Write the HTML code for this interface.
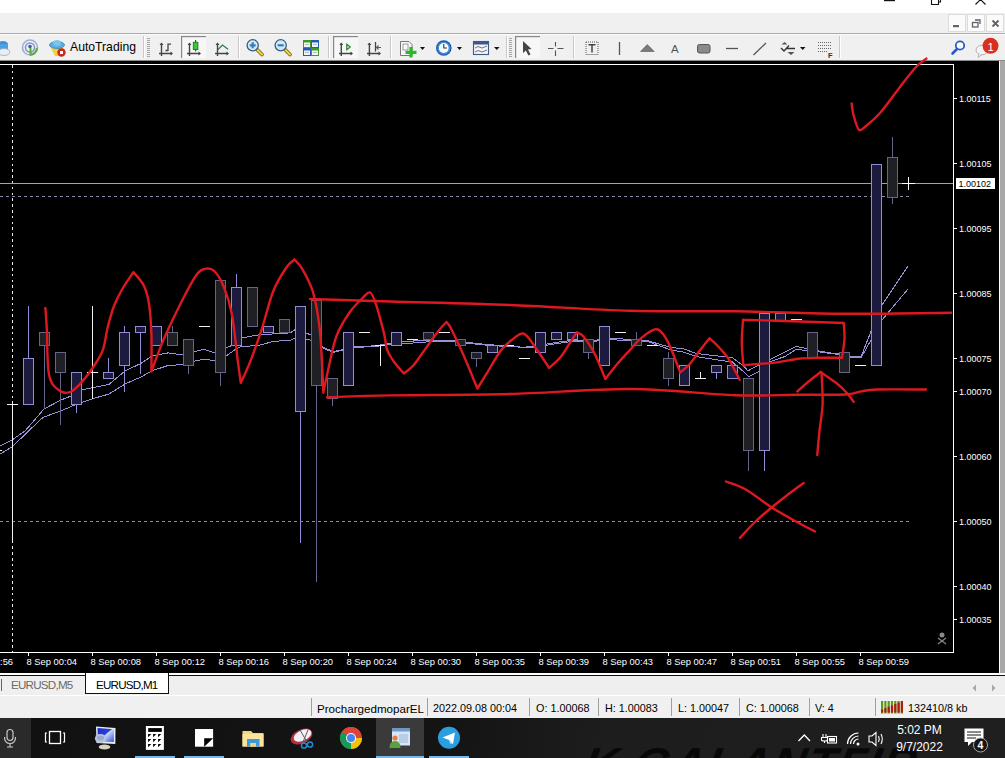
<!DOCTYPE html>
<html><head><meta charset="utf-8">
<style>
html,body{margin:0;padding:0;width:1005px;height:758px;overflow:hidden;background:#f0f0f0;font-family:"Liberation Sans",sans-serif;}
.abs{position:absolute;}
.layer{position:absolute;left:0;top:0;}
.pl{font-family:"Liberation Sans",sans-serif;font-size:9px;fill:#fff;}
.tl{font-family:"Liberation Sans",sans-serif;font-size:9.4px;fill:#fff;}
.st{position:absolute;top:701.5px;font-size:11.5px;color:#000;white-space:nowrap;}
.sep{position:absolute;top:698px;width:1px;height:18px;background:#a0a0a0;}
</style></head><body>
<div class="abs" style="left:0;top:0;width:1005px;height:13px;background:#fff"></div>
<div class="abs" style="left:0;top:13px;width:1005px;height:20px;background:#f0f0f0"></div>
<div class="abs" style="left:0;top:33px;width:1005px;height:1px;background:#a9a9a9"></div>
<div class="abs" style="left:0;top:34px;width:1005px;height:1px;background:#fcfcfc"></div>
<div class="abs" style="left:0;top:35px;width:1005px;height:25px;background:#f0f0f0"></div>
<svg class="layer" width="1005" height="758" viewBox="0 0 1005 758">
<!-- window controls at very top -->
<rect x="884" y="0" width="11" height="1.2" fill="#111"/>
<path d="M931.5 -2 V4.5 H938.5 V-2 M934 -2 V-1 H940.5 V2 H938.5" fill="none" stroke="#111" stroke-width="1.1"/>
<path d="M975.5 4.5 L980.5 -0.5 L985.5 4.5" fill="none" stroke="#111" stroke-width="1.1"/>
<!-- MDI buttons -->
<rect x="948.5" y="14.5" width="17" height="17" fill="#fbfbfb" stroke="#dcdcdc"/>
<rect x="967.5" y="14.5" width="17" height="17" fill="#fbfbfb" stroke="#dcdcdc"/>
<rect x="986.5" y="14.5" width="17" height="17" fill="#fbfbfb" stroke="#dcdcdc"/>
<rect x="953" y="25" width="6" height="2.2" fill="#5d636b"/>
<rect x="972.5" y="22.5" width="5.5" height="4.5" fill="none" stroke="#5d636b" stroke-width="1.3"/>
<path d="M975 20 H980 V24" fill="none" stroke="#5d636b" stroke-width="1.3"/>
<path d="M992.5 20.5 L998.5 26.5 M998.5 20.5 L992.5 26.5" stroke="#5d636b" stroke-width="1.8"/>
<!-- toolbar icons -->
<g id="tb">
<!-- db cloud partial -->
<ellipse cx="3" cy="44" rx="5" ry="3" fill="#3d8fd6"/><rect x="-2" y="44" width="10" height="6" fill="#4aa0e0"/>
<ellipse cx="4" cy="52" rx="6" ry="3.5" fill="#e8eef4" stroke="#9aa8b8" stroke-width="0.8"/>
<!-- signal -->
<circle cx="30" cy="47.5" r="7.5" fill="none" stroke="#9db0d8" stroke-width="1.6"/>
<circle cx="30" cy="47.5" r="4.5" fill="none" stroke="#7d94c8" stroke-width="1.5"/>
<circle cx="30" cy="46.5" r="1.8" fill="#3a5fb0"/>
<path d="M30.5 48 V55 M30 55 Q36 54 37 48" fill="none" stroke="#55b040" stroke-width="2"/>
<!-- autotrading -->
<path d="M51 48 L64 48 L60 56 L55 56 Z" fill="#f0d040"/>
<ellipse cx="57" cy="45" rx="7.5" ry="3.5" fill="#5aaee0" stroke="#3a80b8" stroke-width="0.8"/>
<ellipse cx="57" cy="43" rx="4" ry="3" fill="#7cc4ee"/>
<circle cx="61.5" cy="52.5" r="4.2" fill="#c82a1a"/><rect x="60" y="51" width="3" height="3" fill="#fff"/>
<text x="70" y="51" font-size="12.2" fill="#000" font-family="Liberation Sans">AutoTrading</text>
<rect x="143" y="36" width="1" height="22" fill="#c8c8c8"/><rect x="144" y="36" width="1" height="22" fill="#fff"/>
<g fill="#a8a8a8"><rect x="147" y="38" width="3" height="1"/><rect x="147" y="40" width="3" height="1"/><rect x="147" y="42" width="3" height="1"/><rect x="147" y="44" width="3" height="1"/><rect x="147" y="46" width="3" height="1"/><rect x="147" y="48" width="3" height="1"/><rect x="147" y="50" width="3" height="1"/><rect x="147" y="52" width="3" height="1"/><rect x="147" y="54" width="3" height="1"/><rect x="147" y="56" width="3" height="1"/></g>
<!-- bar chart --><path d="M161.5 43.5 V56 M159 53.5 H172" stroke="#444" stroke-width="1.4" fill="none"/><path d="M159.5 45.0 L161.5 42.5 L163.5 45.0 Z M170.5 51.5 L173 53.5 L170.5 55.5 Z" fill="#444"/><path d="M168 43.5 V51 M165.5 50.5 H168 M168 44.2 H171" stroke="#444" stroke-width="1.3" fill="none"/><rect x="181.5" y="36" width="24.5" height="22" fill="#f7f7f7"/><rect x="181" y="36" width="1.2" height="22" fill="#888"/><rect x="181" y="36" width="25" height="1.2" fill="#888"/><path d="M189.5 43.5 V56 M187 53.5 H200" stroke="#444" stroke-width="1.4" fill="none"/><path d="M187.5 45.0 L189.5 42.5 L191.5 45.0 Z M198.5 51.5 L201 53.5 L198.5 55.5 Z" fill="#444"/><path d="M195.6 40 V51.5" stroke="#1a6a1a" stroke-width="1.2"/><rect x="193.3" y="42.3" width="4.6" height="7.2" fill="#3ac83a" stroke="#1a7a1a" stroke-width="0.9"/><path d="M217.5 43.5 V56 M215 53.5 H228" stroke="#444" stroke-width="1.4" fill="none"/><path d="M215.5 45.0 L217.5 42.5 L219.5 45.0 Z M226.5 51.5 L229 53.5 L226.5 55.5 Z" fill="#444"/><path d="M217.5 50 L222.5 45 L228 49.3" stroke="#2a7a3a" stroke-width="1.2" fill="none"/>
<rect x="238" y="36" width="1" height="22" fill="#c8c8c8"/><rect x="239" y="36" width="1" height="22" fill="#fff"/>
<!-- zoom in -->
<path d="M257.5 50 L262 54.5" stroke="#6a5a10" stroke-width="3.6" stroke-linecap="round"/><path d="M257.5 50 L262 54.5" stroke="#f0d840" stroke-width="2" stroke-linecap="round"/>
<circle cx="252.7" cy="45.3" r="5.6" fill="#cfeaf8" stroke="#3a5a80" stroke-width="1.3"/>
<path d="M249.7 45.3 H255.7 M252.7 42.3 V48.3" stroke="#3a7ab8" stroke-width="2.2"/>
<path d="M285.5 50 L290 54.5" stroke="#6a5a10" stroke-width="3.6" stroke-linecap="round"/><path d="M285.5 50 L290 54.5" stroke="#f0d840" stroke-width="2" stroke-linecap="round"/>
<circle cx="280.7" cy="45.3" r="5.6" fill="#cfeaf8" stroke="#3a5a80" stroke-width="1.3"/>
<path d="M277.7 45.3 H283.7" stroke="#3a7ab8" stroke-width="2.2"/>
<!-- tile -->
<rect x="303" y="40" width="8" height="8" fill="#3c9a2c"/><rect x="311" y="40" width="8" height="8" fill="#2a5ab0"/>
<rect x="303" y="48" width="8" height="8" fill="#2a5ab0"/><rect x="311" y="48" width="8" height="8" fill="#3c9a2c"/>
<rect x="304" y="42.5" width="6" height="4.5" fill="#f4f8f0"/><rect x="312" y="42.5" width="6" height="4.5" fill="#f0f4fc"/>
<rect x="304" y="50.5" width="6" height="4.5" fill="#f0f4fc"/><rect x="312" y="50.5" width="6" height="4.5" fill="#f4f8f0"/>
<path d="M305 44.5 H309 M313 44.5 H317 M305 52.5 H309 M313 52.5 H317" stroke="#aab" stroke-width="0.8"/>
<rect x="328" y="36" width="1" height="22" fill="#c8c8c8"/><rect x="329" y="36" width="1" height="22" fill="#fff"/>
<!-- autoscroll pressed --><rect x="333.5" y="36" width="24.5" height="22" fill="#f7f7f7"/><rect x="333" y="36" width="1.2" height="22" fill="#888"/><rect x="333" y="36" width="25" height="1.2" fill="#888"/><path d="M341.3 43.5 V56 M339 53.5 H352" stroke="#444" stroke-width="1.4" fill="none"/><path d="M339.3 45.0 L341.3 42.5 L343.3 45.0 Z M350.5 51.5 L353 53.5 L350.5 55.5 Z" fill="#444"/><path d="M346.8 44.3 L350.2 47 L346.8 49.7 Z" fill="none" stroke="#2a8a2a" stroke-width="1.3"/><path d="M369.4 43.5 V56 M367 53.5 H380" stroke="#444" stroke-width="1.4" fill="none"/><path d="M367.4 45.0 L369.4 42.5 L371.4 45.0 Z M378.5 51.5 L381 53.5 L378.5 55.5 Z" fill="#444"/><path d="M375.5 42 V51.5" stroke="#444" stroke-width="1.3"/><path d="M381 47.5 H376.5 M378.5 45.5 L376.5 47.5 L378.5 49.5" stroke="#8a4a2a" stroke-width="1.1" fill="none"/>
<rect x="390" y="36" width="1" height="22" fill="#c8c8c8"/><rect x="391" y="36" width="1" height="22" fill="#fff"/>
<!-- new chart -->
<path d="M400.5 41.5 H409 L412 44.5 V55.5 H400.5 Z" fill="#f8f8f8" stroke="#777" stroke-width="1"/>
<rect x="403" y="44" width="5" height="6" fill="none" stroke="#888" stroke-width="0.8"/>
<path d="M411 47 V57.5 M405.5 52.3 H416.5" stroke="#2ab82a" stroke-width="3.2"/>
<path d="M420 47 H425 L422.5 50 Z" fill="#111"/>
<!-- clock -->
<circle cx="443.8" cy="48" r="7.8" fill="#1e56a8"/><circle cx="443.8" cy="48" r="6.6" fill="#3a8ad8"/><circle cx="443.8" cy="48" r="4.9" fill="#f8fbff"/>
<path d="M443.8 44 V48 H447" stroke="#333" stroke-width="1.1" fill="none"/>
<path d="M457 47 H462 L459.5 50 Z" fill="#111"/>
<!-- templates -->
<rect x="473.5" y="41.5" width="15" height="13" fill="#f4f4f8" stroke="#3a5a8a" stroke-width="1.1"/>
<rect x="474" y="42" width="14" height="2.5" fill="#3a5a8a"/>
<path d="M475 48 L478 46.5 L482 48 L487 46" stroke="#666" stroke-width="0.9" fill="none"/><path d="M475 52 L478 50.5 L482 52 L487 50" stroke="#666" stroke-width="0.9" fill="none"/>
<path d="M494 47 H499.5 L496.8 50 Z" fill="#111"/>
<rect x="506" y="36" width="1" height="22" fill="#c8c8c8"/><rect x="507" y="36" width="1" height="22" fill="#fff"/>
<g fill="#a8a8a8"><rect x="509" y="38" width="3" height="1"/><rect x="509" y="40" width="3" height="1"/><rect x="509" y="42" width="3" height="1"/><rect x="509" y="44" width="3" height="1"/><rect x="509" y="46" width="3" height="1"/><rect x="509" y="48" width="3" height="1"/><rect x="509" y="50" width="3" height="1"/><rect x="509" y="52" width="3" height="1"/><rect x="509" y="54" width="3" height="1"/><rect x="509" y="56" width="3" height="1"/></g>
<!-- cursor pressed -->
<rect x="515.5" y="36" width="24.5" height="22" fill="#f7f7f7"/><rect x="515" y="36" width="1.2" height="22" fill="#888"/><rect x="515" y="36" width="25" height="1.2" fill="#888"/>
<path d="M523 41 L523 53 L525.8 50.5 L528.5 55.5 L530.5 54.5 L528 49.5 L531.5 49 Z" fill="#444"/>
<!-- crosshair -->
<path d="M548 48.5 H553.5 M557.5 48.5 H563.5 M555.5 42 V46.5 M555.5 50.5 V56" stroke="#555" stroke-width="1.1"/>
<rect x="573" y="36" width="1" height="22" fill="#c8c8c8"/><rect x="574" y="36" width="1" height="22" fill="#fff"/>
<!-- T -->
<rect x="586" y="42" width="12" height="12.5" fill="none" stroke="#555" stroke-width="1" stroke-dasharray="1 1"/>
<path d="M588.5 44.8 H595.5 M592 44.8 V52.5" stroke="#444" stroke-width="1.5"/>
<path d="M619.5 42 V55" stroke="#555" stroke-width="1.3"/>
<path d="M640.5 51.5 L647.3 44.5 L654.2 51.5 Z" fill="#7a7a7a" stroke="#555" stroke-width="0.6"/>
<text x="671" y="53" font-size="11.5" fill="#555" font-family="Liberation Sans">A</text>
<rect x="697.5" y="44.5" width="12.5" height="8.5" rx="2" fill="#8a8a8a" stroke="#555" stroke-width="1"/>
<path d="M726 48.5 H738" stroke="#555" stroke-width="1.3"/>
<path d="M753.5 55 L766 43" stroke="#555" stroke-width="1.3"/>
<path d="M784.5 42 L787.5 44.5 L781.5 44.5 Z M791 55 L794.5 52 L787.5 52 Z" fill="#555"/>
<path d="M781 48 L784 51 L789 45.5 M786 48.5 H795" stroke="#333" stroke-width="1.4" fill="none"/>
<path d="M800 47 H805.5 L802.7 50 Z" fill="#111"/>
<g stroke="#666" stroke-width="1" stroke-dasharray="1 1"><path d="M818 42.5 H832 M818 45.5 H832 M818 48.5 H832 M818 51.5 H827"/></g>
<text x="828" y="57.5" font-size="7.5" font-weight="bold" fill="#333" font-family="Liberation Sans">F</text>
<rect x="839" y="36" width="1" height="22" fill="#c8c8c8"/><rect x="840" y="36" width="1" height="22" fill="#fff"/>
<!-- search -->
<circle cx="960" cy="45.5" r="4.2" fill="#fff" stroke="#2a5ac8" stroke-width="1.8"/>
<path d="M957 49 L952.5 53.5" stroke="#2a5ac8" stroke-width="2.6" stroke-linecap="round"/>
<!-- chat -->
<ellipse cx="982" cy="50" rx="6" ry="4.8" fill="#f4f4f4" stroke="#aaa" stroke-width="0.9"/>
<path d="M979 54 L978 57.5 L982 54.5" fill="#f4f4f4" stroke="#aaa" stroke-width="0.8"/>
<circle cx="990.5" cy="45.8" r="8" fill="#d8301c"/>
<text x="987.5" y="50.5" font-size="11.5" fill="#fff" font-family="Liberation Sans">1</text>
</g>
</svg>
<svg class="layer" width="1005" height="758" viewBox="0 0 1005 758" style="shape-rendering:crispEdges">
<rect x="0" y="60" width="1005" height="1" fill="#8a8a8a"/>
<rect x="0" y="61" width="999" height="612" fill="#000"/>
<rect x="999" y="61" width="1" height="612" fill="#fff"/>
<rect x="1000" y="61" width="5" height="612" fill="#a8a8a8"/>
<rect x="0" y="64" width="954" height="1" fill="#fff"/>
<rect x="953" y="64" width="1" height="589" fill="#fff"/>
<rect x="0" y="652" width="954" height="1" fill="#fff"/>
<path d="M12.5 65 V652" stroke="#e8e8e8" stroke-width="1" stroke-dasharray="2.6 3.2" fill="none"/>
<rect x="0" y="183" width="953" height="1" fill="#a4a4a4"/>
<path d="M0 196.5 H910" stroke="#8a8aa8" stroke-width="1" stroke-dasharray="3 3" fill="none"/>
<path d="M0 521.5 H910" stroke="#8a8aa8" stroke-width="1" stroke-dasharray="3 3" fill="none"/>
<g><polyline points="0,446 12,440 25,431 44,409 61,400 72,395.6 82,389.7 93,387.6 109,384.4 125,371 141,363.4 152,356 168,352.9 184,355 194,351.8 204,349.3 215,352.9 226,347.6 235,344.4 241,338 258,335 274,333.9 290,332.9 295,329.7 306,333 311,335 322,346.5 333,351.7 343,349.6 354,347 375,345.8 391,343.3 405,341.2 432,340.6 453,340.6 470,342.7 485,344.4 499,345.3 513,346 523,347.4 534,346 545,344.4 557,342.3 570,340.6 582,341 593,340.6 610,338 631,339.6 648,340.6 658,343.8 671,347.4 684,349 696,353.3 709,355 722,356.5 732,357.5 743,365.5 748,370.8 758,365.5 771,358.9 785,352.2 796,346.5 807,348.5 818,350.8 829,352.8 840,354 850,356 861,356.7 871,331.5 882,305 908,266" fill="none" stroke="#9890d8" stroke-width="1"/>
<polyline points="0,454 12,447 40,420 44,417 61,410.8 76,404.5 93,398.6 109,394 125,384 141,377 152,370.8 168,365.5 184,364.5 194,361.3 204,359.2 215,360.7 226,356 235,349.7 241,346.6 258,345.5 274,341.3 290,340.3 295,338 306,339 311,340.3 322,347.5 333,352.5 343,350 354,347.5 375,346.5 391,344.5 403,343.8 432,341.5 453,341.5 470,343.5 485,345 499,346 515,346.5 523,348 534,347 545,345.5 557,343.5 570,341.8 582,342 593,341.5 610,339.6 648,341.7 671,350 684,352.2 696,356.5 709,358.6 722,360.7 732,361.7 744,372 748.5,376.7 758,372 771,361.3 785,356.5 796,349.4 807,350.6 818,351.8 840,354.7 850,357.4 861,358 882,320 908,289" fill="none" stroke="#9890d8" stroke-width="1"/></g>
<rect x="-9" y="450" width="11" height="1" fill="#f0f0f0"/><rect x="7" y="404" width="11" height="1" fill="#f0f0f0"/><rect x="12" y="404" width="1" height="138" fill="#f0f0f0"/><rect x="28" y="306" width="1" height="52" fill="#928cd8"/><rect x="23" y="358" width="11" height="47" fill="#928cd8"/><rect x="24" y="359" width="9" height="45" fill="#1c1a3e"/><rect x="44" y="346" width="1" height="63" fill="#64648c"/><rect x="39" y="332" width="11" height="14" fill="#64648c"/><rect x="40" y="333" width="9" height="12" fill="#1f1f26"/><rect x="60" y="373" width="1" height="52" fill="#64648c"/><rect x="55" y="352" width="11" height="21" fill="#64648c"/><rect x="56" y="353" width="9" height="19" fill="#1f1f26"/><rect x="76" y="405" width="1" height="8" fill="#928cd8"/><rect x="71" y="372" width="11" height="33" fill="#928cd8"/><rect x="72" y="373" width="9" height="31" fill="#1c1a3e"/><rect x="87" y="372" width="11" height="1" fill="#f0f0f0"/><rect x="92" y="306" width="1" height="93" fill="#f0f0f0"/><rect x="108" y="358" width="1" height="14" fill="#928cd8"/><rect x="103" y="372" width="11" height="7" fill="#928cd8"/><rect x="104" y="373" width="9" height="5" fill="#1c1a3e"/><rect x="124" y="326" width="1" height="6" fill="#928cd8"/><rect x="124" y="366" width="1" height="26" fill="#928cd8"/><rect x="119" y="332" width="11" height="34" fill="#928cd8"/><rect x="120" y="333" width="9" height="32" fill="#1c1a3e"/><rect x="140" y="333" width="1" height="41" fill="#928cd8"/><rect x="135" y="326" width="11" height="7" fill="#928cd8"/><rect x="136" y="327" width="9" height="5" fill="#1c1a3e"/><rect x="151" y="326" width="11" height="20" fill="#928cd8"/><rect x="152" y="327" width="9" height="18" fill="#1c1a3e"/><rect x="172" y="326" width="1" height="6" fill="#64648c"/><rect x="167" y="332" width="11" height="14" fill="#64648c"/><rect x="168" y="333" width="9" height="12" fill="#1f1f26"/><rect x="188" y="366" width="1" height="8" fill="#64648c"/><rect x="183" y="339" width="11" height="27" fill="#64648c"/><rect x="184" y="340" width="9" height="25" fill="#1f1f26"/><rect x="199" y="326" width="11" height="1" fill="#f0f0f0"/><rect x="220" y="373" width="1" height="13" fill="#64648c"/><rect x="215" y="280" width="11" height="93" fill="#64648c"/><rect x="216" y="281" width="9" height="91" fill="#1f1f26"/><rect x="236" y="274" width="1" height="13" fill="#928cd8"/><rect x="231" y="287" width="11" height="59" fill="#928cd8"/><rect x="232" y="288" width="9" height="57" fill="#1c1a3e"/><rect x="247" y="287" width="11" height="40" fill="#64648c"/><rect x="248" y="288" width="9" height="38" fill="#1f1f26"/><rect x="263" y="326" width="11" height="7" fill="#928cd8"/><rect x="264" y="327" width="9" height="5" fill="#1c1a3e"/><rect x="279" y="319" width="11" height="14" fill="#64648c"/><rect x="280" y="320" width="9" height="12" fill="#1f1f26"/><rect x="300" y="412" width="1" height="131" fill="#928cd8"/><rect x="295" y="306" width="11" height="106" fill="#928cd8"/><rect x="296" y="307" width="9" height="104" fill="#1c1a3e"/><rect x="316" y="386" width="1" height="196" fill="#64648c"/><rect x="311" y="300" width="11" height="86" fill="#64648c"/><rect x="312" y="301" width="9" height="84" fill="#1f1f26"/><rect x="332" y="399" width="1" height="7" fill="#64648c"/><rect x="327" y="378" width="11" height="21" fill="#64648c"/><rect x="328" y="379" width="9" height="19" fill="#1f1f26"/><rect x="343" y="332" width="11" height="54" fill="#928cd8"/><rect x="344" y="333" width="9" height="52" fill="#1c1a3e"/><rect x="359" y="332" width="11" height="1" fill="#f0f0f0"/><rect x="375" y="345" width="11" height="1" fill="#f0f0f0"/><rect x="380" y="345" width="1" height="21" fill="#f0f0f0"/><rect x="391" y="332" width="11" height="14" fill="#928cd8"/><rect x="392" y="333" width="9" height="12" fill="#1c1a3e"/><rect x="407" y="339" width="11" height="1" fill="#f0f0f0"/><rect x="423" y="332" width="11" height="8" fill="#64648c"/><rect x="424" y="333" width="9" height="6" fill="#1f1f26"/><rect x="439" y="332" width="11" height="1" fill="#f0f0f0"/><rect x="455" y="339" width="11" height="7" fill="#64648c"/><rect x="456" y="340" width="9" height="5" fill="#1f1f26"/><rect x="476" y="359" width="1" height="8" fill="#64648c"/><rect x="471" y="352" width="11" height="7" fill="#64648c"/><rect x="472" y="353" width="9" height="5" fill="#1f1f26"/><rect x="487" y="345" width="11" height="8" fill="#928cd8"/><rect x="488" y="346" width="9" height="6" fill="#1c1a3e"/><rect x="503" y="345" width="11" height="1" fill="#f0f0f0"/><rect x="519" y="358" width="11" height="1" fill="#f0f0f0"/><rect x="535" y="332" width="11" height="21" fill="#928cd8"/><rect x="536" y="333" width="9" height="19" fill="#1c1a3e"/><rect x="551" y="332" width="11" height="8" fill="#928cd8"/><rect x="552" y="333" width="9" height="6" fill="#1c1a3e"/><rect x="567" y="332" width="11" height="8" fill="#928cd8"/><rect x="568" y="333" width="9" height="6" fill="#1c1a3e"/><rect x="588" y="353" width="1" height="6" fill="#64648c"/><rect x="583" y="339" width="11" height="14" fill="#64648c"/><rect x="584" y="340" width="9" height="12" fill="#1f1f26"/><rect x="599" y="326" width="11" height="40" fill="#928cd8"/><rect x="600" y="327" width="9" height="38" fill="#1c1a3e"/><rect x="615" y="332" width="11" height="1" fill="#f0f0f0"/><rect x="636" y="332" width="1" height="7" fill="#64648c"/><rect x="631" y="339" width="11" height="7" fill="#64648c"/><rect x="632" y="340" width="9" height="5" fill="#1f1f26"/><rect x="647" y="345" width="11" height="1" fill="#f0f0f0"/><rect x="668" y="352" width="1" height="6" fill="#64648c"/><rect x="668" y="379" width="1" height="7" fill="#64648c"/><rect x="663" y="358" width="11" height="21" fill="#64648c"/><rect x="664" y="359" width="9" height="19" fill="#1f1f26"/><rect x="679" y="365" width="11" height="21" fill="#928cd8"/><rect x="680" y="366" width="9" height="19" fill="#1c1a3e"/><rect x="695" y="378" width="11" height="1" fill="#f0f0f0"/><rect x="700" y="372" width="1" height="7" fill="#f0f0f0"/><rect x="716" y="373" width="1" height="6" fill="#928cd8"/><rect x="711" y="365" width="11" height="8" fill="#928cd8"/><rect x="712" y="366" width="9" height="6" fill="#1c1a3e"/><rect x="727" y="365" width="11" height="14" fill="#928cd8"/><rect x="728" y="366" width="9" height="12" fill="#1c1a3e"/><rect x="748" y="451" width="1" height="20" fill="#64648c"/><rect x="743" y="378" width="11" height="73" fill="#64648c"/><rect x="744" y="379" width="9" height="71" fill="#1f1f26"/><rect x="764" y="451" width="1" height="20" fill="#928cd8"/><rect x="759" y="313" width="11" height="138" fill="#928cd8"/><rect x="760" y="314" width="9" height="136" fill="#1c1a3e"/><rect x="775" y="313" width="11" height="8" fill="#928cd8"/><rect x="776" y="314" width="9" height="6" fill="#1c1a3e"/><rect x="791" y="319" width="11" height="1" fill="#f0f0f0"/><rect x="807" y="332" width="11" height="27" fill="#64648c"/><rect x="808" y="333" width="9" height="25" fill="#1f1f26"/><rect x="823" y="358" width="11" height="1" fill="#f0f0f0"/><rect x="839" y="352" width="11" height="21" fill="#64648c"/><rect x="840" y="353" width="9" height="19" fill="#1f1f26"/><rect x="855" y="365" width="11" height="1" fill="#f0f0f0"/><rect x="871" y="164" width="11" height="202" fill="#928cd8"/><rect x="872" y="165" width="9" height="200" fill="#1c1a3e"/><rect x="892" y="137" width="1" height="20" fill="#64648c"/><rect x="892" y="198" width="1" height="6" fill="#64648c"/><rect x="887" y="157" width="11" height="41" fill="#64648c"/><rect x="888" y="158" width="9" height="39" fill="#1f1f26"/>
<rect x="902" y="183" width="13" height="1" fill="#fff"/><rect x="908" y="177" width="1" height="13" fill="#fff"/>
<rect x="956" y="178" width="39" height="11" fill="#fff"/>
<text x="958.5" y="186.5" class="pl" fill="#000" style="fill:#000">1.00102</text>
<rect x="954" y="98" width="3" height="1" fill="#fff"/><text x="959" y="102.3" class="pl">1.00115</text><rect x="954" y="163" width="3" height="1" fill="#fff"/><text x="959" y="167.3" class="pl">1.00105</text><rect x="954" y="228" width="3" height="1" fill="#fff"/><text x="959" y="232.3" class="pl">1.00095</text><rect x="954" y="293" width="3" height="1" fill="#fff"/><text x="959" y="297.3" class="pl">1.00085</text><rect x="954" y="358" width="3" height="1" fill="#fff"/><text x="959" y="362.3" class="pl">1.00075</text><rect x="954" y="391" width="3" height="1" fill="#fff"/><text x="959" y="395.3" class="pl">1.00070</text><rect x="954" y="456" width="3" height="1" fill="#fff"/><text x="959" y="460.3" class="pl">1.00060</text><rect x="954" y="521" width="3" height="1" fill="#fff"/><text x="959" y="525.3" class="pl">1.00050</text><rect x="954" y="586" width="3" height="1" fill="#fff"/><text x="959" y="590.3" class="pl">1.00040</text><rect x="954" y="619" width="3" height="1" fill="#fff"/><text x="959" y="623.3" class="pl">1.00035</text><text x="-37.5" y="664.6" class="tl">8 Sep 23:56</text><rect x="28" y="653" width="1" height="3" fill="#fff"/><text x="26.5" y="664.6" class="tl">8 Sep 00:04</text><rect x="92" y="653" width="1" height="3" fill="#fff"/><text x="90.5" y="664.6" class="tl">8 Sep 00:08</text><rect x="156" y="653" width="1" height="3" fill="#fff"/><text x="154.5" y="664.6" class="tl">8 Sep 00:12</text><rect x="220" y="653" width="1" height="3" fill="#fff"/><text x="218.5" y="664.6" class="tl">8 Sep 00:16</text><rect x="284" y="653" width="1" height="3" fill="#fff"/><text x="282.5" y="664.6" class="tl">8 Sep 00:20</text><rect x="348" y="653" width="1" height="3" fill="#fff"/><text x="346.5" y="664.6" class="tl">8 Sep 00:24</text><rect x="412" y="653" width="1" height="3" fill="#fff"/><text x="410.5" y="664.6" class="tl">8 Sep 00:30</text><rect x="476" y="653" width="1" height="3" fill="#fff"/><text x="474.5" y="664.6" class="tl">8 Sep 00:35</text><rect x="540" y="653" width="1" height="3" fill="#fff"/><text x="538.5" y="664.6" class="tl">8 Sep 00:39</text><rect x="604" y="653" width="1" height="3" fill="#fff"/><text x="602.5" y="664.6" class="tl">8 Sep 00:43</text><rect x="668" y="653" width="1" height="3" fill="#fff"/><text x="666.5" y="664.6" class="tl">8 Sep 00:47</text><rect x="732" y="653" width="1" height="3" fill="#fff"/><text x="730.5" y="664.6" class="tl">8 Sep 00:51</text><rect x="796" y="653" width="1" height="3" fill="#fff"/><text x="794.5" y="664.6" class="tl">8 Sep 00:55</text><rect x="860" y="653" width="1" height="3" fill="#fff"/><text x="858.5" y="664.6" class="tl">8 Sep 00:59</text>
<g fill="#888" transform="translate(938,632)" style="shape-rendering:auto"><circle cx="4" cy="3" r="2.5"/><path d="M0 6 L8 12 M8 6 L0 12" stroke="#888" stroke-width="1.2"/></g>
</svg>
<svg class="layer" width="1005" height="758" viewBox="0 0 1005 758">
<g fill="none" stroke="#de1820" stroke-width="2.4" stroke-linecap="round" stroke-linejoin="round">
<path d="M45.4,308 C45.6,311.7 46.5,322.1 46.9,330 C47.2,337.9 47.1,348.1 47.5,355.5 C47.9,362.9 48.0,369.6 49,374.5 C50.0,379.4 50.7,382.0 53.2,385 C55.7,388.0 60.6,391.5 63.8,392.5 C67.0,393.5 69.0,392.9 72.2,391 C75.4,389.1 79.3,384.9 82.8,380.9 C86.3,376.9 90.0,372.1 93.3,367 C96.6,361.9 100.3,357.0 102.8,350.2 C105.2,343.4 106.1,333.5 108,326 C109.9,318.5 111.9,311.3 114.4,305 C116.9,298.7 119.7,293.5 122.9,288 C126.1,282.5 131.7,274.8 133.4,272.2 M133.4,272.2 C135.2,274.5 141.4,280.4 144,285.9 C146.6,291.4 148.0,296.9 149.2,305 C150.4,313.1 151.0,323.3 151.4,334.4 C151.8,345.5 151.4,365.2 151.4,371.4 M151.4,371.4 C153.2,366.8 158.2,352.6 161.9,343.6 C165.6,334.6 169.9,325.7 173.8,317.4 C177.8,309.1 181.7,301.0 185.6,293.7 C189.5,286.4 194.1,277.7 197.5,273.5 C200.9,269.3 203.0,269.1 205.8,268.7 C208.6,268.3 211.2,268.0 214.2,271 C217.2,274.0 220.7,279.2 223.7,286.5 C226.7,293.8 229.6,302.3 232,315 C234.4,327.7 236.5,351.3 238,362.6 C239.5,373.9 240.3,379.4 240.8,382.8 M240.8,382.8 C242.3,379.4 246.3,371.5 249.8,362.6 C253.3,353.7 257.8,341.2 261.7,329.3 C265.6,317.4 269.1,301.5 273.2,291.2 C277.3,280.9 282.9,272.8 286.4,267.5 C289.9,262.2 293.0,260.9 294.3,259.6 M294.3,259.6 C295.6,261.1 299.1,263.5 302.2,268.8 C305.3,274.1 309.8,281.8 312.7,291.2 C315.6,300.6 317.8,313.6 319.3,325.5 C320.9,337.4 321.3,351.2 322,362.4 C322.7,373.6 323.1,387.6 323.3,392.7 M323.3,392.7 C324.2,388.5 326.4,377.1 328.6,367.7 C330.8,358.2 333.0,345.2 336.5,336 C340.0,326.8 345.3,318.7 349.7,312.3 C354.1,305.9 359.4,301.1 362.8,297.8 C366.2,294.5 368.0,291.4 370.2,292.5 C372.4,293.6 373.7,297.6 376,304.4 C378.3,311.2 382.1,325.8 384,333.4 C385.9,340.9 385.4,344.9 387.1,349.7 C388.8,354.5 391.5,358.4 394.3,362.3 C397.1,366.2 402.2,371.5 403.8,373.4 M403.8,373.4 C405.4,372.1 409.6,369.7 413.3,365.5 C417.0,361.3 421.7,353.9 425.9,348.1 C430.1,342.3 435.2,335.1 438.6,330.7 C442.0,326.3 445.2,323.4 446.5,322 M446.5,322 C447.3,323.2 448.4,323.3 451.3,329 C454.2,334.7 459.5,346.1 463.9,356 C468.2,365.9 475.1,383.1 477.4,388.5 M477.4,388.5 C479.1,385.7 483.9,378.0 487.7,371.8 C491.5,365.6 496.7,356.3 500.3,351.3 C503.9,346.3 506.1,344.7 509.5,341.8 C512.9,338.9 517.7,334.7 520.6,333.8 C523.5,332.9 524.1,333.3 527,336.2 C529.9,339.1 534.3,346.0 538,351.3 C541.7,356.6 547.2,365.1 549.1,367.9 M549.1,367.9 C551.0,366.2 556.8,361.7 560.2,357.6 C563.6,353.5 566.9,347.5 569.7,343.3 C572.5,339.1 575.6,334.1 576.8,332.3 M576.8,332.3 C578.0,333.1 580.9,333.3 583.9,337 C586.9,340.7 591.4,347.4 595,354.4 C598.6,361.4 603.6,374.9 605.3,379 M605.3,379 C607.3,376.5 613.2,368.8 617.2,364 C621.2,359.2 625.6,354.7 629.5,350.5 C633.4,346.3 636.4,342.1 640.6,338.6 C644.8,335.1 651.1,330.2 654.8,329.4 C658.5,328.6 660.1,330.7 662.8,333.8 C665.4,336.9 667.8,341.5 670.7,348 C673.6,354.5 678.6,368.5 680.2,372.6 M680.2,372.6 C681.8,371.2 686.5,367.6 689.7,364 C692.9,360.4 695.9,355.6 699.2,351.3 C702.5,347.0 707.8,340.5 709.5,338.3 M709.5,338.3 C711.0,339.7 715.2,343.3 718.2,346.5 C721.2,349.7 725.1,353.9 727.7,357.6 C730.3,361.3 732.0,365.0 734,368.7 C736.0,372.4 738.7,377.9 739.6,379.8"/>
<path d="M310,299 C323.3,299.4 356.7,300.5 390,301.5 C423.3,302.5 470.0,303.4 510,305 C550.0,306.6 592.5,309.8 630,310.8 C667.5,311.9 699.2,310.8 735,311.3 C770.8,311.8 809.0,313.6 845,313.8 C881.0,314.0 933.3,312.9 951,312.7"/>
<path d="M327,397.2 C337.5,396.9 359.5,395.9 390,395.4 C420.5,394.9 470.0,395.1 510,394 C550.0,392.9 592.5,388.8 630,389 C667.5,389.2 707.0,394.4 735,395.3 C763.0,396.2 779.7,394.8 798,394.7 C816.3,394.6 834.5,395.1 845,394.5 C855.5,393.9 855.7,392.2 861,391.4 C866.3,390.6 866.2,389.8 877,389.5 C887.8,389.2 917.8,389.5 926,389.5"/>
<path d="M743,319.8 C748.7,320.0 760.2,320.3 777,320.8 C793.8,321.3 832.6,322.6 843.7,323 M843.7,323 C843.8,325.6 844.8,333.0 844.5,338.8 C844.2,344.6 842.4,354.6 842,357.8 M842,357.8 C838.2,357.8 826.7,357.6 819.4,357.8 C812.1,358.0 805.3,358.0 798.3,358.8 C791.3,359.6 784.2,361.5 777.2,362.4 C770.2,363.3 761.7,363.6 756.1,364.1 C750.5,364.6 745.5,365.0 743.4,365.2 M743.4,365.2 C743.1,361.5 741.9,350.6 741.8,343 C741.7,335.4 742.8,323.7 743,319.8"/>
<path d="M817.3,455 C817.6,451.1 818.5,440.1 819.4,431.6 C820.3,423.1 822.2,414.1 822.6,404.2 C823.0,394.3 821.7,377.8 821.5,372.5"/>
<path d="M797.3,391.5 C799.1,389.9 804.1,385.2 808,382 C811.9,378.8 818.4,373.8 820.5,372.1"/>
<path d="M820.5,372 C823.1,373.8 832.0,379.7 836.3,383 C840.5,386.3 843.1,388.9 846,392 C848.9,395.1 852.4,400.1 853.7,401.7"/>
<path d="M851.6,103.4 C851.9,105.3 852.3,110.6 853.5,115 C854.7,119.4 856.9,128.0 859,129.8 C861.1,131.6 862.5,128.8 866,126 C869.5,123.2 874.3,119.5 880,113 C885.7,106.5 894.0,94.7 900,87 C906.0,79.3 911.6,71.7 916,67 C920.4,62.3 924.7,60.0 926.4,58.6"/>
<path d="M726,481.5 C729.2,482.8 737.5,484.8 745,489 C752.5,493.2 762.7,501.7 771,507 C779.3,512.3 787.7,516.9 795,521 C802.3,525.1 811.7,529.8 815,531.5"/>
<path d="M740,537.8 C742.5,535.2 749.8,527.0 755,522 C760.2,517.0 765.2,512.8 771,508 C776.8,503.2 784.6,497.2 790,493 C795.4,488.8 801.3,484.7 803.6,483"/>
</g></svg>
<!-- tabs -->
<div class="abs" style="left:0;top:673px;width:1005px;height:23px;background:#fff"></div>
<div class="abs" style="left:0;top:675px;width:1005px;height:1px;background:#111"></div>
<div class="abs" style="left:0;top:676px;width:1005px;height:19px;background:#efefef"></div>
<div class="abs" style="left:1px;top:679px;width:1px;height:12px;background:#666"></div>
<div class="abs" style="left:11px;top:677.5px;font-size:11.6px;letter-spacing:-0.75px;color:#6a6a6a;white-space:nowrap">EURUSD,M5</div>
<div class="abs" style="left:85px;top:673px;width:82px;height:20px;background:#fff;border:1.2px solid #111;border-top:none"></div>
<div class="abs" style="left:96px;top:677.5px;font-size:11.6px;letter-spacing:-0.75px;color:#000;white-space:nowrap">EURUSD,M1</div>
<!-- scroll arrows -->
<svg class="layer" width="1005" height="758" viewBox="0 0 1005 758">
<path d="M976 684.5 L972.5 688 L976 691.5 Z" fill="#a8a8a8"/>
<path d="M992 684.5 L995.5 688 L992 691.5 Z" fill="#a8a8a8"/>
</svg>
<!-- status -->
<div class="abs" style="left:0;top:696px;width:1005px;height:22px;background:#f0f0f0"></div>
<div class="sep" style="left:311px"></div>
<div class="st" style="left:317px;font-size:11.6px">ProchargedmoparEL</div>
<div class="sep" style="left:427px"></div>
<div class="st" style="left:433px;font-size:10.8px">2022.09.08 00:04</div>
<div class="sep" style="left:529px"></div>
<div class="st" style="left:536px;font-size:10.8px">O: 1.00068</div>
<div class="sep" style="left:598px"></div>
<div class="st" style="left:605px;font-size:10.8px">H: 1.00083</div>
<div class="sep" style="left:671px"></div>
<div class="st" style="left:678px;font-size:10.8px">L: 1.00047</div>
<div class="sep" style="left:739px"></div>
<div class="st" style="left:746px;font-size:10.8px">C: 1.00068</div>
<div class="sep" style="left:809px"></div>
<div class="st" style="left:815px;font-size:10.8px">V: 4</div>
<div class="sep" style="left:875px"></div>
<div class="st" style="left:908px;font-size:10.8px">132410/8 kb</div>
<svg class="layer" width="1005" height="758" viewBox="0 0 1005 758">
<g>
<rect x="881.0" y="701" width="2.2" height="12.5" fill="#5a9a1a"/><rect x="881.0" y="709.5" width="2.2" height="3.0" fill="#b01a10"/><rect x="884.3" y="701" width="2.2" height="12.5" fill="#5a9a1a"/><rect x="884.3" y="708.1" width="2.2" height="4.4" fill="#b01a10"/><rect x="887.6" y="701" width="2.2" height="12.5" fill="#5a9a1a"/><rect x="887.6" y="706.7" width="2.2" height="5.8" fill="#b01a10"/><rect x="890.9" y="701" width="2.2" height="12.5" fill="#5a9a1a"/><rect x="890.9" y="705.3" width="2.2" height="7.2" fill="#b01a10"/><rect x="894.2" y="701" width="2.2" height="12.5" fill="#5a9a1a"/><rect x="894.2" y="703.9" width="2.2" height="8.6" fill="#b01a10"/><rect x="897.5" y="701" width="2.2" height="12.5" fill="#5a9a1a"/><rect x="897.5" y="702.5" width="2.2" height="10.0" fill="#b01a10"/><rect x="900.8" y="701" width="2.2" height="12.5" fill="#5a9a1a"/><rect x="900.8" y="701.1" width="2.2" height="11.4" fill="#b01a10"/>
</g>
</svg>
<!-- taskbar -->
<div class="abs" style="left:0;top:718px;width:1005px;height:40px;background:linear-gradient(100deg,#111 0%,#141414 45%,#1d1d1d 60%,#1f1f1f 100%);overflow:hidden">
<div style="position:absolute;left:584px;top:19px;font-size:46px;font-weight:bold;font-style:italic;color:#080808;white-space:nowrap;letter-spacing:2px;transform:skewX(-12deg)">K GALANTFIR</div></div>
<div class="abs" style="left:0;top:718px;width:31px;height:40px;background:#2a2a2a"></div>
<div class="abs" style="left:376px;top:718px;width:48px;height:40px;background:#3a3a3a"></div>
<svg class="layer" width="1005" height="758" viewBox="0 0 1005 758">
<!-- mic -->
<rect x="7" y="729.5" width="6" height="11" rx="3" fill="none" stroke="#c8c8c8" stroke-width="1.2"/>
<path d="M4.5 737 Q4.5 743.5 10 743.5 Q15.5 743.5 15.5 737 M10 743.5 V747 M7 747 H13" fill="none" stroke="#c8c8c8" stroke-width="1.2"/>
<!-- task view -->
<rect x="49.5" y="731.5" width="11" height="12" fill="none" stroke="#fff" stroke-width="1.3"/>
<path d="M47 733 H45.5 V742 H47 M63 733 H64.5 V742 H63" fill="none" stroke="#fff" stroke-width="1.2"/>
<!-- monitor -->
<defs><linearGradient id="scr" x1="0" y1="0" x2="1" y2="1"><stop offset="0" stop-color="#1a28c8"/><stop offset="0.45" stop-color="#2a40d8"/><stop offset="0.5" stop-color="#c8d8f8"/><stop offset="1" stop-color="#3050e0"/></linearGradient></defs>
<ellipse cx="104.5" cy="747" rx="5.8" ry="2.6" fill="#d4d4c0"/>
<path d="M96 726.5 L115.5 728 L115.3 744 L96.5 743 Z" fill="#e8ecf4"/>
<path d="M97.5 728 L114 729.3 L113.8 742 L98 741.5 Z" fill="url(#scr)"/>
<ellipse cx="100.5" cy="738.5" rx="5.6" ry="4.6" fill="#b8c4dc"/>
<ellipse cx="100.5" cy="738" rx="3.5" ry="2.4" fill="#8a9cc8" opacity="0.7"/>
<!-- calculator -->
<rect x="145.9" y="726" width="18" height="23.9" fill="#fff"/>
<rect x="148.2" y="728.1" width="13.6" height="3.8" fill="#000"/>
<path d="M148.1 734 h3.2 l-3.2 3.2z M153.1 734 h3.2 l-3.2 3.2z M158.1 734 h3.2 l-3.2 3.2z M148.1 739 h3.2 l-3.2 3.2z M153.1 739 h3.2 l-3.2 3.2z M158.1 739 h3.2 l-3.2 3.2z M148.1 744 h3.2 l-3.2 3.2z M153.1 744 h3.2 l-3.2 3.2z M158.1 744 h3.2 l-3.2 3.2z " fill="#000"/>
<!-- sticky -->
<rect x="195" y="729" width="18.1" height="17.7" fill="#fff"/>
<path d="M204.2 738.2 H213.1 L204.2 746.7 Z" fill="#000"/>
<!-- folder -->
<path d="M242.5 731 H251 L253 733 H263.5 V746.5 H242.5 Z" fill="#f6d57a"/>
<rect x="242.5" y="734" width="21" height="12.5" fill="#fbe39a"/>
<path d="M247 739 H259.5 V746.5 H256 V743 H250.5 V746.5 H247 Z" fill="#3a9ae0"/>
<rect x="250.5" y="743" width="5.5" height="3.5" fill="#f6d57a"/>
<!-- snipping -->
<ellipse cx="301.5" cy="736.5" rx="11.5" ry="7" transform="rotate(-25 301.5 736.5)" fill="#b83040"/>
<ellipse cx="302.5" cy="735.5" rx="9.5" ry="5.3" transform="rotate(-25 302.5 735.5)" fill="#f4f0f4"/>
<path d="M300 730 L307 742 M308 730 L303 742" stroke="#5a5a6a" stroke-width="1"/>
<circle cx="304" cy="745.5" r="2.6" fill="none" stroke="#2a8ad0" stroke-width="1.5"/><circle cx="310" cy="744.5" r="2.6" fill="none" stroke="#2a8ad0" stroke-width="1.5"/>
<!-- chrome -->
<circle cx="351" cy="738" r="11" fill="#db4437"/>
<path d="M351 738 L341.5 743.5 A11 11 0 0 1 342 731.8 Z" fill="#0f9d58"/>
<path d="M351 738 L341.5 743.5 A11 11 0 0 0 351 749 L356.5 747.5 Z" fill="#0f9d58"/>
<path d="M351 738 L362 738 A11 11 0 0 1 351 749 Z" fill="#f4c20d"/>
<path d="M341.5 732.5 A11 11 0 0 1 360.5 732.5 L351 732.5 Z" fill="#db4437"/>
<circle cx="351" cy="738" r="5" fill="#fff"/><circle cx="351" cy="738" r="4" fill="#4285f4"/>
<!-- mt4 -->
<rect x="392" y="728.5" width="18" height="17" fill="#d8e6f6"/>
<rect x="392" y="728.5" width="18" height="3" fill="#6a9ad0"/>
<rect x="399" y="734" width="9" height="9" fill="#b8cde8"/>
<circle cx="395" cy="738" r="2.6" fill="#e08040"/>
<path d="M389.5 748 Q389.5 741 395 741 Q400.5 741 400.5 748 Z" fill="#5aa040"/>
<!-- telegram -->
<circle cx="449" cy="737.8" r="11" fill="#2a9fe0"/>
<path d="M442.5 737.5 L455 732.5 L453 744 L449 740 Z" fill="#fff"/>
<path d="M449 740 L450 743.5 L453 744 Z" fill="#c8e0f0"/>
<!-- underline bars -->
<rect x="135" y="756" width="40" height="2" fill="#76b9ed"/>
<rect x="184" y="756" width="40" height="2" fill="#76b9ed"/>
<rect x="376" y="756" width="48" height="2" fill="#76b9ed"/>
<rect x="429" y="756" width="40" height="2" fill="#76b9ed"/>
<!-- tray -->
<path d="M798.5 741 L804.3 735 L810 741" fill="none" stroke="#fff" stroke-width="1.3"/>
<path d="M823 734 V737.5 M826 734 V737.5 M821.5 737.5 H827.5 V740 Q827.5 741 824.5 741 Q821.5 741 821.5 740 Z M824.5 741 V743" fill="none" stroke="#fff" stroke-width="1.1"/>
<rect x="827.5" y="736.5" width="9" height="6.5" fill="none" stroke="#fff" stroke-width="1.1"/>
<rect x="829" y="738" width="6" height="3.5" fill="#fff"/>
<g fill="none" stroke="#fff" stroke-width="1.2">
<path d="M847.5 744 A11 11 0 0 1 858.5 733"/><path d="M850.5 744 A8 8 0 0 1 858.5 736"/><path d="M853.5 744 A5 5 0 0 1 858.5 739"/>
</g><circle cx="858" cy="744" r="1.5" fill="#fff"/>
<path d="M869 736 H872 L876 732.5 V745.5 L872 742 H869 Z" fill="none" stroke="#fff" stroke-width="1.1"/>
<path d="M878.5 736 Q880 739 878.5 742 M881 734 Q883.5 739 881 744" fill="none" stroke="#fff" stroke-width="1.1"/>
<text x="919.5" y="733.5" font-size="12" fill="#fff" text-anchor="middle" font-family="Liberation Sans">5:02 PM</text>
<text x="919.5" y="750.5" font-size="12" fill="#fff" text-anchor="middle" font-family="Liberation Sans">9/7/2022</text>
<path d="M964.5 728.5 H983.5 V742 H972 L968 746 V742 H964.5 Z" fill="#fff"/>
<path d="M967 732 H981 M967 735 H981 M967 738 H976" stroke="#161616" stroke-width="1"/>
<circle cx="980.5" cy="745" r="7" fill="#161616" stroke="#aaa" stroke-width="1"/>
<text x="980.5" y="749" font-size="10.5" font-weight="bold" fill="#fff" text-anchor="middle" font-family="Liberation Sans">4</text>
</svg>
</body></html>
